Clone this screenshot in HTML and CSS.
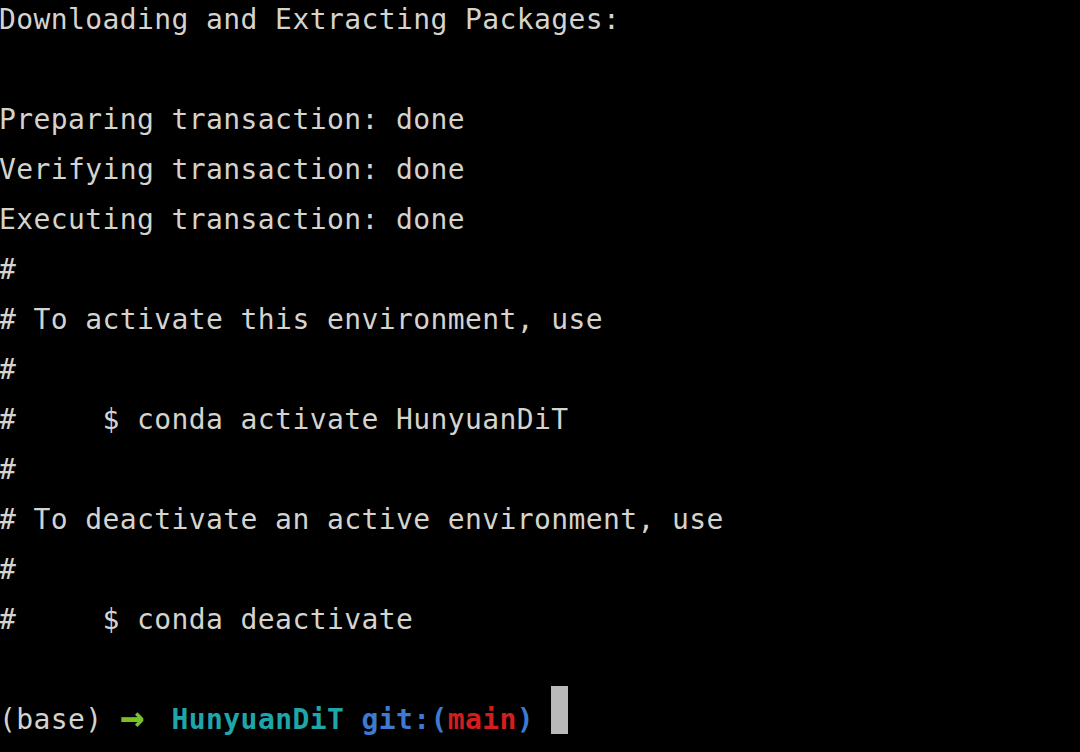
FILE: index.html
```html
<!DOCTYPE html>
<html>
<head>
<meta charset="utf-8">
<link rel="stylesheet" href="styles.css">
</head>
<body>
<pre class="term">Downloading and Extracting Packages:

Preparing transaction: done
Verifying transaction: done
Executing transaction: done
#
# To activate this environment, use
#
#     $ conda activate HunyuanDiT
#
# To deactivate an active environment, use
#
#     $ conda deactivate

(base) <span class="arrow">→</span>  <span class="dir">HunyuanDiT</span> <span class="git">git:(</span><span class="branch">main</span><span class="git">)</span> <span class="cursor"></span></pre>
</body>
</html>
```
FILE: styles.css
```css
html, body {
  margin: 0;
  padding: 0;
  background: #000;
  width: 1080px;
  height: 752px;
  overflow: hidden;
}
.term {
  margin: -5px 0 0 -1px;
  padding: 0;
  font-family: "DejaVu Sans Mono", "Liberation Mono", monospace;
  font-size: 28px;
  letter-spacing: 0.4px;
  line-height: 50px;
  color: #d4d3ce;
  white-space: pre;
}
.arrow {
  display: inline-block;
  color: #7bc22a;
  font-weight: bold;
  transform: scale(1.45, 1.5);
  transform-origin: 0 60%;
}
.dir {
  color: #1fa6a8;
  font-weight: bold;
}
.git {
  color: #3e7ad0;
  font-weight: bold;
}
.branch {
  color: #d41e1e;
  font-weight: bold;
}
.cursor {
  display: inline-block;
  width: 17px;
  height: 48px;
  margin-top: -10px;
  vertical-align: -5px;
  background: #b9b9b9;
}
```
